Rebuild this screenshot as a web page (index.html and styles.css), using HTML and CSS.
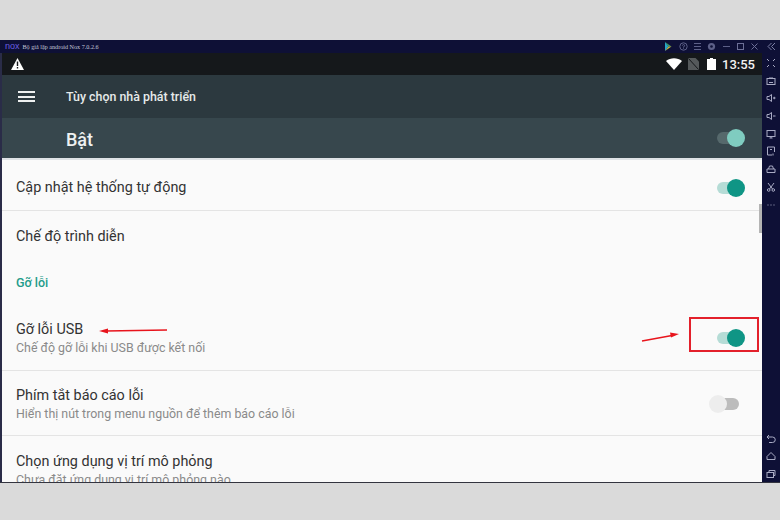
FILE: index.html
```html
<!DOCTYPE html>
<html lang="vi">
<head>
    <meta charset="UTF-8">
    <meta name="viewport" content="width=device-width, initial-scale=1.0">
    <title>Tùy chọn nhà phát triển</title>
    <link rel="stylesheet" href="styles.css">
</head>
<body>
    <div class="window">
        <!-- thanh tieu de cua Nox -->
        <div class="titlebar">
            <span class="nox-logo">nox</span>
            <span class="nox-title">Bộ giả lập android Nox 7.0.2.6</span>
            <div class="title-icons">
                <svg width="9" height="9" viewBox="0 0 9 9"><path d="M1 0l3.500 4.500L1 9z" fill="#27a6c9"/><path d="M1 0l6.500 4.500H4.500z" fill="#3f9f6a"/><path d="M1 9l6.500-4.500H4.500z" fill="#c9b23a"/></svg>
                <svg width="9" height="9" viewBox="0 0 9 9" fill="none" stroke="#5d6088"><circle cx="4.500" cy="4.500" r="3.700"/><path d="M3.400 3.600a1.100 1.100 0 1 1 1.100 1.200v.8M4.500 6.300v.8"/></svg>
                <svg width="9" height="9" viewBox="0 0 9 9" stroke="#5d6088"><path d="M1 1.500h7M1 4.500h7M1 7.500h7"/></svg>
                <svg width="9" height="9" viewBox="0 0 9 9"><circle cx="4.500" cy="4.500" r="3.600" fill="#5d6088"/><circle cx="4.500" cy="4.500" r="1.300" fill="#0e1036"/></svg>
                <svg width="9" height="9" viewBox="0 0 9 9" stroke="#5d6088"><path d="M1 4.500h7"/></svg>
                <svg width="9" height="9" viewBox="0 0 9 9" fill="none" stroke="#6c6f96"><rect x="1.500" y="1.500" width="6" height="6"/></svg>
                <svg width="9" height="9" viewBox="0 0 9 9" stroke="#6c6f96"><path d="M1.500 1.500l6 6M7.500 1.500l-6 6"/></svg>
                <svg class="collapse" width="9" height="9" viewBox="0 0 9 9" fill="none" stroke="#7d80a6"><path d="M4.500 1L1 4.500 4.500 8M8 1L4.500 4.500 8 8"/></svg>
            </div>
        </div>

        <div class="body-row">
            <div class="android">
                <div class="statusbar">
                    <svg width="13" height="12" viewBox="0 0 13 12"><path d="M6.500 0L13 12H0z" fill="#fff"/><path d="M5.800 3.500h1.400v4.500H5.800zM5.800 9h1.400v1.500H5.800z" fill="#15181b"/></svg>
                    <div class="status-right">
                        <svg class="wifi" width="16" height="12" viewBox="0 0 16 12"><path d="M8 12L0 3C4.500-.8 11.500-.8 16 3z" fill="#fff"/></svg>
                        <svg class="nosim" width="11" height="12" viewBox="0 0 11 12"><path d="M0 0h7.500L11 3.500V12H0z" fill="#55595b"/><path d="M.5.500l10 11" stroke="#15181b"/></svg>
                        <svg class="battery" width="9" height="12" viewBox="0 0 9 12"><path d="M3 0h3v1h3v11H0V1h3z" fill="#fff"/></svg>
                        <span class="clock">13:55</span>
                    </div>
                </div>
                <div class="toolbar">
                    <div class="hamburger"><i></i><i></i><i></i></div>
                    <span class="toolbar-title">Tùy chọn nhà phát triển</span>
                </div>
                <div class="master-row">
                    <span class="master-label">Bật</span>
                    <div class="toggle toggle-master"><span class="track"></span><span class="thumb"></span></div>
                </div>
                <div class="list">
                    <div class="row row-plain">
                        <div class="row-title">Cập nhật hệ thống tự động</div>
                        <div class="toggle toggle-on"><span class="track"></span><span class="thumb"></span></div>
                    </div>
                    <div class="row row-plain">
                        <div class="row-title">Chế độ trình diễn</div>
                    </div>
                    <div class="section">Gỡ lỗi</div>
                    <div class="row row-double">
                        <div class="row-text">
                            <div class="row-title">Gỡ lỗi USB</div>
                            <div class="row-sub">Chế độ gỡ lỗi khi USB được kết nối</div>
                        </div>
                        <div class="toggle toggle-on"><span class="track"></span><span class="thumb"></span></div>
                    </div>
                    <div class="row row-double">
                        <div class="row-text row-text-low">
                            <div class="row-title">Phím tắt báo cáo lỗi</div>
                            <div class="row-sub">Hiển thị nút trong menu nguồn để thêm báo cáo lỗi</div>
                        </div>
                        <div class="toggle toggle-off"><span class="track"></span><span class="thumb"></span></div>
                    </div>
                    <div class="row row-double row-last">
                        <div>
                            <div class="row-title">Chọn ứng dụng vị trí mô phỏng</div>
                            <div class="row-sub">Chưa đặt ứng dụng vị trí mô phỏng nào</div>
                        </div>
                    </div>
                    <div class="scrollbar"></div>
                </div>
            </div>

            <!-- thanh cong cu ben phai -->
            <div class="sidebar">
                <div class="side-top">
                    <svg viewBox="0 0 10 10"><path d="M1 1l2 2M9 1L7 3M1 9l2-2M9 9L7 7"/></svg>
                    <svg viewBox="0 0 10 10"><rect x="1" y="2.500" width="8" height="6"/><path d="M3.500 1L5 2.500 6.500 1M3 6.500h4"/></svg>
                    <svg viewBox="0 0 10 10"><path d="M1 3.500h2L5.500 1.500v7L3 6.500H1zM7 5h2.500M8.250 3.750v2.500"/></svg>
                    <svg viewBox="0 0 10 10"><path d="M1 3.500h2L5.500 1.500v7L3 6.500H1zM7 5h2.500"/></svg>
                    <svg viewBox="0 0 10 10"><rect x="1" y="1.500" width="8" height="6"/><path d="M3.500 9h3M5 7.500V9"/></svg>
                    <svg viewBox="0 0 10 10"><path d="M6 9H1.500V1h7v5"/><path d="M4 3.500h2M7 7.500v2"/></svg>
                    <svg viewBox="0 0 10 10"><path d="M1 5h8v3.500H1zM2.500 5l1-3h3l1 3"/></svg>
                    <svg viewBox="0 0 10 10"><circle cx="2.700" cy="8" r="1.300"/><circle cx="7.300" cy="8" r="1.300"/><path d="M3.500 7L8 1M6.500 7L2 1"/></svg>
                    <svg viewBox="0 0 10 10"><path d="M1.500 5h1M4.500 5h1M7.500 5h1"/></svg>
                </div>
                <div class="side-bottom">
                    <svg viewBox="0 0 10 10"><path d="M3 1L1 3l2 2M1 3h5.500a2.500 2.500 0 0 1 0 5.500H3"/></svg>
                    <svg viewBox="0 0 10 10"><path d="M5 1.500L9 5.500V8.500H1V5.500z"/></svg>
                    <svg viewBox="0 0 10 10"><rect x="1" y="3.500" width="6.500" height="5"/><path d="M3 3.500V1.500h6v5H7.500"/></svg>
                </div>
            </div>
        </div>

        <!-- chu thich mau do -->
        <div class="red-box"></div>
        <svg class="mark-arrows" width="780" height="443" viewBox="0 0 780 443">
            <path d="M167 290L106 291" stroke="#e8141c" stroke-width="1.500" fill="none"/>
            <path d="M99 291l9-2.500v5z" fill="#e8141c"/>
            <path d="M642 301L672 295.500" stroke="#e8141c" stroke-width="1.500" fill="none"/>
            <path d="M679 294l-9-1.500 1 5z" fill="#e8141c"/>
        </svg>
    </div>
</body>
</html>
```

FILE: styles.css
```css
body {
    margin: 0;
    padding-top: 40px;
    height: 480px;
    background-color: #dadada;
    font-family: Roboto, "Noto Sans", sans-serif;
    overflow: hidden;
}
.window {
    position: relative;
    height: 443px;
    display: flex;
    flex-direction: column;
    overflow: hidden;
    border-bottom: 1px solid #33343f;
    box-sizing: border-box;
}
.titlebar {
    height: 13px;
    flex: none;
    display: flex;
    align-items: center;
    background-color: #0e1036;
    padding-left: 5px;
}
.nox-logo {
    font-family: "Liberation Sans", sans-serif;
    font-size: 9px;
    color: #6a5fe0;
    margin-right: 3px;
    line-height: 13px;
}
.nox-title {
    font-family: "Liberation Serif", serif;
    font-size: 6.150px;
    color: #c4c6d8;
    white-space: nowrap;
}
.title-icons {
    margin-left: auto;
    display: flex;
    align-items: center;
    gap: 5.300px;
    padding-right: 4.500px;
}
.title-icons svg {
    display: block;
}
.title-icons .collapse {
    margin-left: 2px;
}
.body-row {
    flex: 1;
    display: flex;
    min-height: 0;
}
.android {
    flex: 1;
    min-width: 0;
    display: flex;
    flex-direction: column;
    border-left: 2px solid #2a2c48;
}
.statusbar {
    height: 22px;
    flex: none;
    display: flex;
    align-items: center;
    justify-content: space-between;
    background-color: #15181b;
    padding: 0 7px 0 9px;
}
.status-right {
    display: flex;
    align-items: center;
}
.wifi {
    margin-right: 6px;
}
.nosim {
    margin-right: 8px;
}
.battery {
    margin-right: 6px;
}
.clock {
    color: #f2f2f2;
    font-size: 13px;
    font-weight: 500;
}
.toolbar {
    height: 43px;
    flex: none;
    display: flex;
    align-items: center;
    background-color: #2c393f;
}
.hamburger {
    width: 17px;
    margin-left: 16px;
    margin-right: 31px;
    display: flex;
    flex-direction: column;
    gap: 2.500px;
}
.hamburger i {
    display: block;
    height: 2px;
    background-color: #eef0f0;
}
.toolbar-title {
    color: #e6eaea;
    font-size: 12.400px;
    font-weight: 500;
}
.master-row {
    height: 42px;
    flex: none;
    display: flex;
    align-items: center;
    justify-content: space-between;
    background-color: #37474d;
    border-bottom: 2px solid #dfe3e6;
    box-sizing: border-box;
    padding-left: 64px;
    padding-right: 17px;
}
.master-label {
    color: #eef1f1;
    font-size: 18px;
    font-weight: 500;
    padding-top: 2px;
}
.list {
    position: relative;
    flex: 1;
    min-height: 0;
    overflow: hidden;
    background-color: #fafafa;
}
.row {
    display: flex;
    align-items: center;
    justify-content: space-between;
    padding-left: 14px;
    padding-right: 17px;
    border-bottom: 1px solid #e4e4e4;
}
.row-plain {
    height: 51px;
    box-sizing: border-box;
    padding-top: 6px;
}
.row-plain + .row-plain {
    height: 49px;
    padding-top: 2px;
    border-bottom: none;
}
.row-double {
    height: 65px;
    box-sizing: border-box;
}
.row-text {
    padding-top: 2px;
}
.row-text-low {
    padding-top: 4px;
}
.row-last {
    align-items: flex-start;
    padding-top: 17px;
    border-bottom: none;
}
.row-title {
    color: #333;
    font-size: 14.400px;
    line-height: 18px;
}
.row-sub {
    color: #8a8a8a;
    font-size: 12.400px;
    line-height: 18px;
}
.section {
    height: 46px;
    box-sizing: border-box;
    padding-bottom: 2px;
    display: flex;
    align-items: center;
    padding-left: 14px;
    color: #1f9c8a;
    font-size: 12.500px;
    font-weight: 500;
}
.toggle {
    position: relative;
    width: 28px;
    height: 18px;
    flex: none;
}
.track {
    position: absolute;
    left: 0;
    top: 3px;
    width: 24px;
    height: 12px;
    border-radius: 6px;
}
.thumb {
    position: absolute;
    left: 10px;
    top: 0;
    width: 18px;
    height: 18px;
    border-radius: 50%;
}
.toggle-on .track {
    background-color: #b5dcd6;
}
.toggle-on .thumb {
    background-color: #0f9585;
}
.toggle-master .track {
    background-color: #56696c;
}
.toggle-master .thumb {
    background-color: #7fccc0;
}
.toggle-off {
    margin-right: 8px;
    margin-top: 2px;
}
.toggle-off .track {
    left: 6px;
    background-color: #bcbcbc;
}
.toggle-off .thumb {
    left: 0;
    background-color: #ededed;
}
.scrollbar {
    position: absolute;
    right: 0;
    top: 44px;
    width: 3px;
    height: 29px;
    background-color: #b4b4b4;
}
.sidebar {
    width: 18px;
    flex: none;
    display: flex;
    flex-direction: column;
    justify-content: space-between;
    background-color: #0e1036;
    padding: 5px 0 3px;
    box-sizing: border-box;
}
.side-top, .side-bottom {
    display: flex;
    flex-direction: column;
    align-items: center;
    gap: 7.700px;
}
.sidebar svg {
    display: block;
    width: 10px;
    height: 10px;
    fill: none;
    stroke: #a9abc4;
    stroke-width: 1;
}
.red-box {
    position: absolute;
    left: 689px;
    top: 277px;
    width: 70px;
    height: 35px;
    box-sizing: border-box;
    border: 2px solid #e3202b;
}
.mark-arrows {
    position: absolute;
    left: 0;
    top: 0;
    pointer-events: none;
}
```
